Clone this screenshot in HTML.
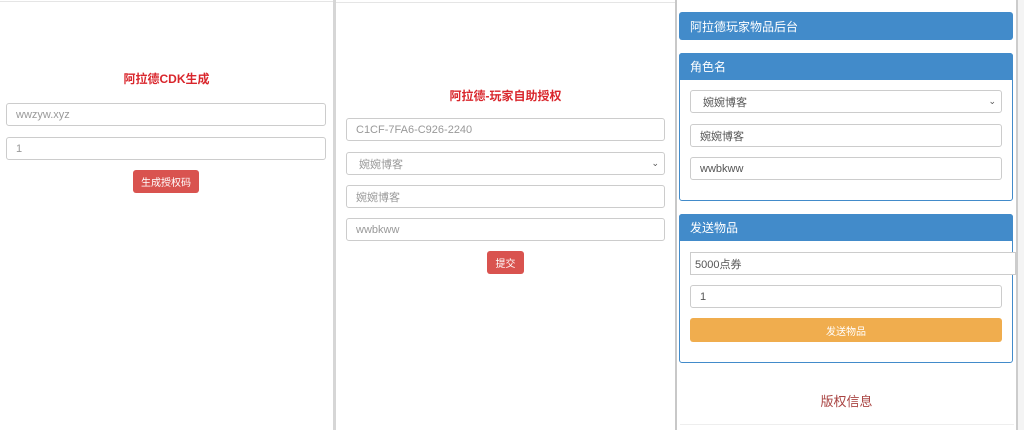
<!DOCTYPE html>
<html><head><meta charset="utf-8"><style>
*{box-sizing:border-box;margin:0;padding:0}
body{width:1024px;height:430px;overflow:hidden;background:#fff;font-family:"Liberation Sans","Noto Sans CJK SC",sans-serif;font-size:11px;position:relative}
.a{position:absolute}
.in{position:absolute;border:1px solid #ccc;border-radius:3px;background:#fff;color:#999;padding-left:9px;display:flex;align-items:center;font-size:11px}
.t{color:#d9262c;font-weight:bold;font-size:12px;text-align:center}
.btn{position:absolute;background:#d9534f;color:#fff;border-radius:3px;display:flex;align-items:center;justify-content:center;font-size:10px}
.hd{position:absolute;background:#428bca;color:#fff;font-size:12px;padding-left:11px;border-radius:3px 3px 0 0;display:flex;align-items:center}
.pb{position:absolute;border:1px solid #428bca;border-radius:3px}
.ar{position:absolute;right:5px;font-size:9px;color:#555}
</style></head><body>
<div class="a" style="left:0;top:0;width:333px;height:2px;border-bottom:1px solid #e5e5e5"></div>
<div class="a" style="left:333px;top:0;width:3px;height:430px;background:#d6d6d6"></div>
<div class="a" style="left:336px;top:0;width:339px;height:3px;border-bottom:1px solid #e5e5e5"></div>
<div class="a" style="left:675px;top:0;width:2px;height:430px;background:#c8c8c8"></div>
<div class="a" style="left:1016px;top:0;width:2px;height:430px;background:#ccc"></div>
<div class="a" style="left:1018px;top:0;width:6px;height:430px;background:#f4f4f4"></div>

<div class="a t" style="left:0;width:333px;top:70px">阿拉德CDK生成</div>
<div class="in" style="left:6px;top:103px;width:320px;height:23px">wwzyw.xyz</div>
<div class="in" style="left:6px;top:137px;width:320px;height:23px">1</div>
<div class="btn" style="left:133px;top:170px;width:66px;height:23px">生成授权码</div>

<div class="a t" style="left:336px;width:339px;top:87px">阿拉德-玩家自助授权</div>
<div class="in" style="left:346px;top:118px;width:319px;height:23px">C1CF-7FA6-C926-2240</div>
<div class="in" style="left:346px;top:152px;width:319px;height:23px;padding-left:12px">婉婉博客<span class="ar">⌄</span></div>
<div class="in" style="left:346px;top:185px;width:319px;height:23px">婉婉博客</div>
<div class="in" style="left:346px;top:218px;width:319px;height:23px">wwbkww</div>
<div class="btn" style="left:487px;top:251px;width:37px;height:23px">提交</div>

<div class="hd" style="left:679px;top:12px;width:334px;height:28px;border-radius:3px">阿拉德玩家物品后台</div>
<div class="pb" style="left:679px;top:53px;width:334px;height:148px"></div>
<div class="hd" style="left:679px;top:53px;width:334px;height:27px">角色名</div>
<div class="in" style="left:690px;top:90px;width:312px;height:23px;color:#555;padding-left:12px">婉婉博客<span class="ar">⌄</span></div>
<div class="in" style="left:690px;top:124px;width:312px;height:23px;color:#555">婉婉博客</div>
<div class="in" style="left:690px;top:157px;width:312px;height:23px;color:#555">wwbkww</div>
<div class="pb" style="left:679px;top:214px;width:334px;height:149px"></div>
<div class="hd" style="left:679px;top:214px;width:334px;height:27px">发送物品</div>
<div class="in" style="left:690px;top:252px;width:326px;height:23px;color:#555;padding-left:4px;border-radius:0">5000点券</div>
<div class="in" style="left:690px;top:285px;width:312px;height:23px;color:#555">1</div>
<div class="btn" style="left:690px;top:318px;width:312px;height:24px;background:#f0ad4e">发送物品</div>
<div class="a" style="left:677px;width:339px;top:391px;text-align:center;color:#a94442;font-size:13px">版权信息</div>
<div class="a" style="left:680px;top:424px;width:334px;height:1px;background:#eee"></div>
</body></html>
